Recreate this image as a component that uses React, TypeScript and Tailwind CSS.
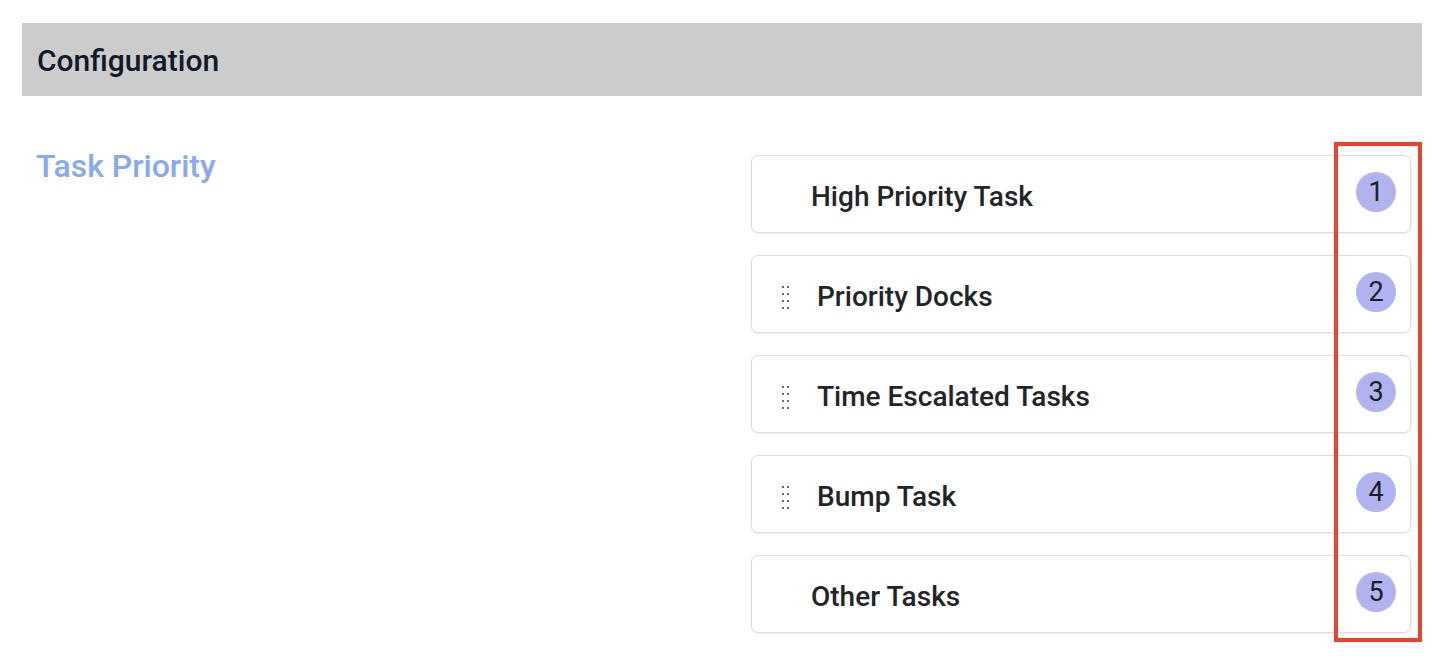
import React from "react";

const items = [
  { label: "High Priority Task", handle: false },
  { label: "Priority Docks", handle: true },
  { label: "Time Escalated Tasks", handle: true },
  { label: "Bump Task", handle: true },
  { label: "Other Tasks", handle: false },
];

function Handle() {
  return (
    <div className="grid grid-cols-2 gap-x-[3px] gap-y-[5px] w-[7px]">
      {Array.from({ length: 8 }).map((_, i) => (
        <span key={i} className="block w-[2px] h-[2px] bg-[#6b6b6b]" />
      ))}
    </div>
  );
}

export default function App() {
  return (
    <div
      className="relative w-[1439px] h-[661px] bg-white overflow-hidden pl-[22px] pr-[17px] pt-[23px]"
      style={{ fontFamily: "Roboto, 'Noto Sans', sans-serif" }}
    >
      <div className="h-[73px] bg-[#cccccc] flex items-center pl-[15px]">
        <span className="text-[30px] font-medium text-[#111827] leading-none pt-[2px]">Configuration</span>
      </div>
      <div className="flex">
        <div className="w-[729px] pl-[14px] pt-[54px]">
          <span className="text-[32px] font-medium text-[#88a8f1] leading-none">Task Priority</span>
        </div>
        <div className="w-[660px] pt-[59px] flex flex-col gap-[22px]">
          {items.map((it, i) => (
            <div
              key={it.label}
              className="h-[78px] bg-white border border-[#dcdcdc] rounded-[7px] shadow-[0_1px_3px_rgba(0,0,0,0.08)] flex items-center pr-[14px]"
            >
              {it.handle ? (
                <div className="flex items-center pl-[30px] pt-[6px]">
                  <Handle />
                  <span className="ml-[28px] text-[28px] font-medium text-[#222428] leading-none">{it.label}</span>
                </div>
              ) : (
                <span className="pl-[59px] pt-[6px] text-[28px] font-medium text-[#222428] leading-none">{it.label}</span>
              )}
              <div className="ml-auto -mt-[4px] w-[40px] h-[40px] rounded-full bg-[#b0b3ef] flex items-center justify-center text-[27px] text-[#1c1e22]">
                {i + 1}
              </div>
            </div>
          ))}
        </div>
      </div>
      <div className="absolute left-[1334px] top-[142px] w-[88px] h-[500px] border-[4px] border-[#e9432b] pointer-events-none" />
    </div>
  );
}
